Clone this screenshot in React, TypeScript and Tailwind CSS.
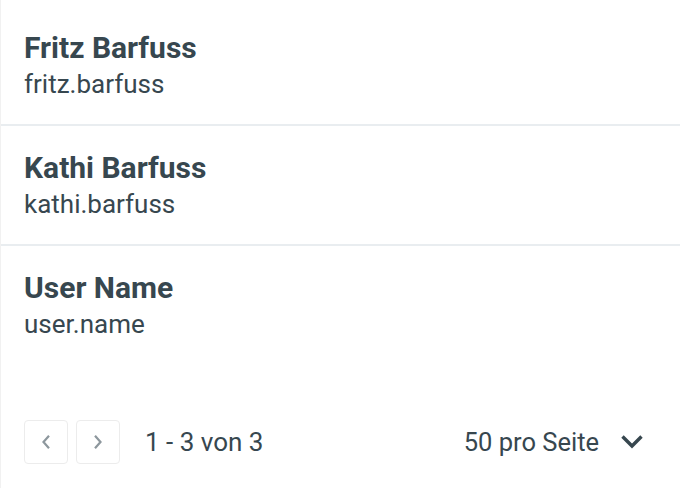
const users = [
  { name: "Fritz Barfuss", login: "fritz.barfuss" },
  { name: "Kathi Barfuss", login: "kathi.barfuss" },
  { name: "User Name", login: "user.name" },
];

export default function App() {
  return (
    <div
      className="w-[680px] h-[488px] bg-white border-l border-[#f1f1f1] text-[#37474f] overflow-hidden"
      style={{ fontFamily: "Roboto, 'Liberation Sans', sans-serif" }}
    >
      <ul className="pt-[6px]">
        {users.map((u, i) => (
          <li
            key={u.login}
            className={
              "h-[120px] pl-[23px] pr-6 pt-[25px] " +
              (i < users.length - 1 ? "border-b-2 border-[#e9edf0]" : "")
            }
          >
            <div className="text-[30px] leading-[34px] font-bold">{u.name}</div>
            <div className="mt-[2px] text-[26px] leading-[34px]">{u.login}</div>
          </li>
        ))}
      </ul>

      {/* pagination */}
      <div className="flex items-center justify-between pl-[23px] pr-9 mt-[54px]">
        <div className="flex items-center gap-2">
          <button className="w-11 h-11 flex items-center justify-center rounded border border-[#ececec] text-[#8d979d]">
            <svg width="16" height="16" viewBox="0 0 16 16" fill="none" stroke="currentColor" strokeWidth="2.2">
              <path d="M11 1.8 L5.5 8 L11 14.2" />
            </svg>
          </button>
          <button className="w-11 h-11 flex items-center justify-center rounded border border-[#ececec] text-[#8d979d]">
            <svg width="16" height="16" viewBox="0 0 16 16" fill="none" stroke="currentColor" strokeWidth="2.2">
              <path d="M5 1.8 L10.5 8 L5 14.2" />
            </svg>
          </button>
          <span className="ml-[17px] text-[26px]">1 - 3 von 3</span>
        </div>
        <div className="flex items-center gap-[21px]">
          <span className="text-[25.5px]">50 pro Seite</span>
          <svg width="24" height="24" viewBox="0 0 24 24" fill="none" stroke="currentColor" strokeWidth="3.4">
            <path d="M2.5 6.5 L12 16 L21.5 6.5" />
          </svg>
        </div>
      </div>
    </div>
  );
}
